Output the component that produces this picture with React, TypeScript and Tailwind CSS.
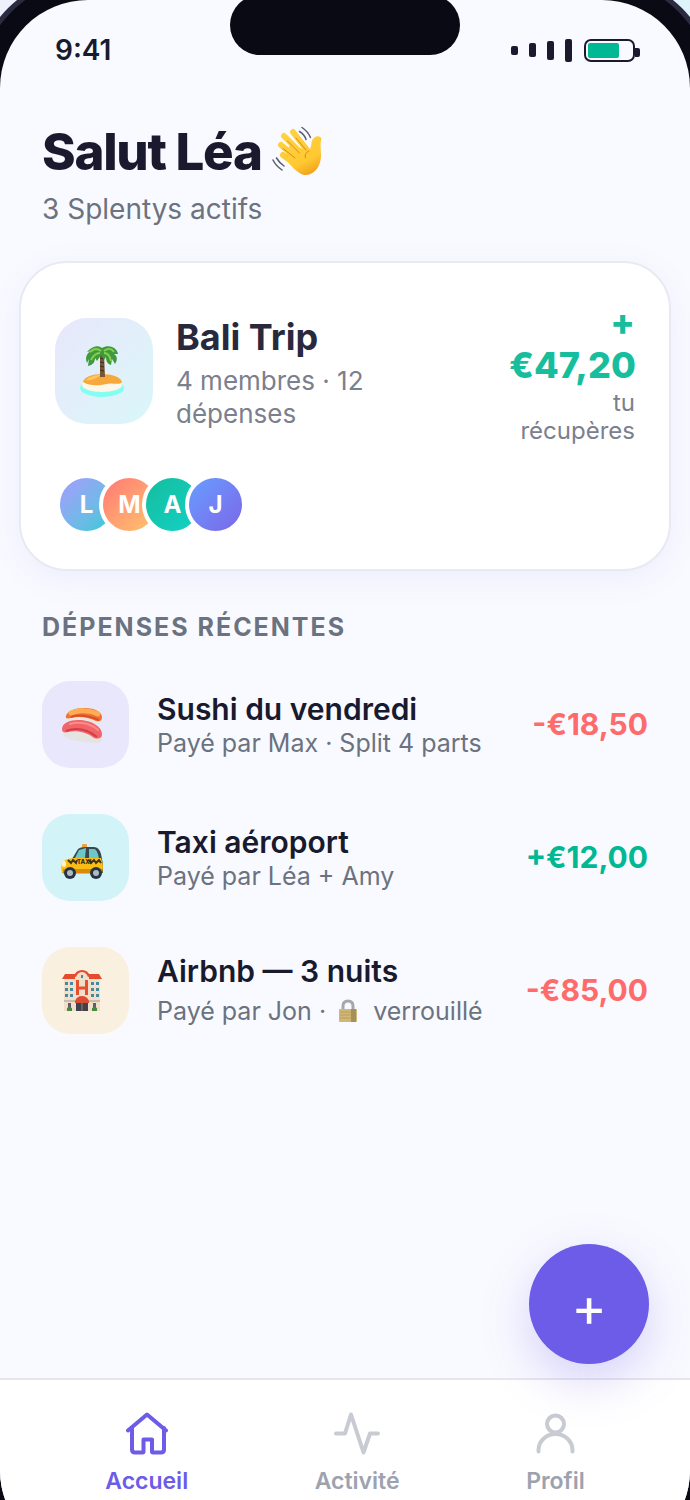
const icons = {
  home: (
    <svg viewBox="0 0 42 43" className="h-[43px] w-[42px]" fill="none" stroke="currentColor" strokeWidth="4" strokeLinecap="round" strokeLinejoin="round">
      <path d="M2 18.500 21 2.500l19 16" />
      <path d="M6 16v21.500q0 3 3 3h7.500q1 0 1-1v-12h8.500v12q0 1 1 1H35q3 0 3-3V16" />
    </svg>
  ),
  activity: (
    <svg viewBox="0 0 46 43" className="h-[43px] w-[46px]" fill="none" stroke="currentColor" strokeWidth="4" strokeLinecap="round" strokeLinejoin="round">
      <path d="M2 21.500h9L17 2.500l12.500 38 6.500-19h8" />
    </svg>
  ),
  profile: (
    <svg viewBox="0 0 40 43" className="h-[43px] w-[40px]" fill="none" stroke="currentColor" strokeWidth="4" strokeLinecap="round">
      <circle cx="20.500" cy="12" r="8.500" />
      <path d="M3.500 39.500v-1.500a17 16 0 0 1 34 0v1.500" />
    </svg>
  ),
};

const members = [
  { letter: "L", color: "from-[#a29bfe] to-[#20cbd6]" },
  { letter: "M", color: "from-[#ff7675] to-[#fdc56b]" },
  { letter: "A", color: "from-[#16bd9d] to-[#12d2c6]" },
  { letter: "J", color: "from-[#659dff] to-[#7a66e9]" },
];

const WaveIcon = () => (
  <svg viewBox="0 0 52 52" className="h-[52px] w-[52px]" role="img" aria-label="Coucou">
    <defs>
      <linearGradient id="hand" gradientUnits="userSpaceOnUse" x1="14" y1="6" x2="36" y2="50">
        <stop offset="0" stopColor="#ffd23f" />
        <stop offset="0.7" stopColor="#ffc933" />
        <stop offset="1" stopColor="#f0a01a" />
      </linearGradient>
    </defs>
    <g fill="none" stroke="url(#hand)" strokeLinecap="round">
      <path d="M12 10 30 28" strokeWidth="6" />
      <path d="m21 6 14 18" strokeWidth="6" />
      <path d="m9 19 18 15" strokeWidth="6" />
      <path d="m11 29 15 11" strokeWidth="6" />
    </g>
    <path d="M18 18 36 25q3-2 3.500-8c.5-7 9-9 10-4-2 6 0 12-.5 18C48 43 40 50 32 49 26 48 17 38 13 32Z" fill="url(#hand)" />
    <path d="m15.500 15 12 12M24 12l10 12M11 22.500 23 32M37 25c-3 1-4.500 4-3.500 7" fill="none" stroke="#d98b16" strokeLinecap="round" />
    <path d="M30 1.500q6 4 8.500 10M27.500 5.500q5 3 6.500 8M1 34q3 6 9 10M4.500 32q3 5 7.500 8" fill="none" stroke="#5a5c70" strokeWidth="1.500" strokeLinecap="round" />
  </svg>
);

const IslandIcon = () => (
  <svg viewBox="0 0 46 53" className="h-[53px] w-[46px]" aria-hidden="true">
    <ellipse cx="23" cy="43" rx="22" ry="9" fill="#82fff0" />
    <ellipse cx="23" cy="40" rx="20" ry="7" fill="#fff6e8" />
    <path d="M4 37c1-5 9-8 19-8s19 3 20 8c-3 4-9 0-16 2S10 41 4 37Z" fill="#f6a83c" />
    <path d="M7 35c3-3 9-5 15-5-4 3-10 6-15 5Z" fill="#ffc763" />
    <path d="M21 9h4l1 23h-5Z" fill="#79562f" />
    <path d="M21 13l4 1m-4 3 4 1m-4 3 4 1m-4 3 4 1" stroke="#3c2c1d" />
    <path d="M23 3C18-1 12 2 8 7l4-1c-5 3-6 7-4 12l2-4-1 7c5-1 7-4 7-8l2 3 4-6 3 5 2-3c0 5 2 7 5 8l1-6 3 5c3-5 2-8-1-10h4C38 2 29-1 23 3Z" fill="#3f9a3d" />
    <path d="M22 6c-4-3-8-2-11 1M21 8c-4 0-7 3-9 7M25 6c4-3 7-3 10 1M25 8c4 0 6 3 7 8" fill="none" stroke="#86cf4d" strokeWidth="2" />
  </svg>
);

const SushiIcon = () => (
  <svg viewBox="0 0 42 42" className="h-[42px] w-[42px]" aria-hidden="true">
    <path d="M5 12h35l1 5q-1 3-4 3L8 18c-3 0-4-3-3-6Z" fill="#e9e7e6" />
    <path d="M5 12C6 7 14 4 24 4s17 4 17 9c0 4-2 5-6 4-8-4-18-5-25-3-4 1-6 0-5-2Z" fill="#f0703a" />
    <path d="M10 9c7-3 19-3 27 1" stroke="#ffad4e" strokeWidth="5" fill="none" strokeLinecap="round" />
    <path d="M10 13c8-3 18-1 28 3" stroke="#d84f22" strokeWidth="2" fill="none" />
    <path d="M1 25h36l4 8c1 4-1 6-5 6C24 39 3 36 2 30Z" fill="#e6e4e3" />
    <path d="M1 25c0-6 8-9 16-9 14 0 24 7 24 14 0 5-4 5-8 4-7-6-18-8-26-6-4 1-6 0-6-3Z" fill="#f0656a" />
    <path d="M9 20c9-3 20-1 28 6" stroke="#ff8b86" strokeWidth="2" fill="none" strokeLinecap="round" />
    <path d="M5 27c11-4 22-1 31 6" stroke="#d63c47" strokeWidth="2" fill="none" />
  </svg>
);

const TaxiIcon = () => (
  <svg viewBox="0 -7 42 42" className="h-[42px] w-[42px]" aria-hidden="true">
    <rect x="21" y="0" width="5" height="4" rx="1" fill="#f3a13c" />
    <path d="M11 15 17 5q2-2 8-2h8q5 0 7 7l2 10v9H1v-8q0-4 10-6Z" fill="#394650" />
    <path d="m14 14 4-8 7-2-1 10ZM28 5h5q3 0 5 9H28Z" fill="#6cc8c7" />
    <path d="M1 20q1-5 11-6h28q2 5 2 9l-1 7H2q-3-4-1-10Z" fill="#f9bd16" />
    <path d="M2 25h39v4H2Z" fill="#dc8907" />
    <path d="m7 16 3 3 2-3 3 3 1-3M28 16l2 3 3-3 2 3 3-3 2 3" stroke="#3c351b" strokeWidth="2" fill="none" />
    <text x="16" y="20" fontSize="6" fontWeight="800" fill="#2c2815">TAXI</text>
    <ellipse cx="3" cy="20" rx="2" ry="3" fill="#fff4c8" />
    <circle cx="9" cy="29" r="6" fill="#263342" />
    <circle cx="9" cy="29" r="3" fill="#b0bac2" />
    <circle cx="35" cy="29" r="6" fill="#263342" />
    <circle cx="35" cy="29" r="3" fill="#b0bac2" />
  </svg>
);

const HotelIcon = () => (
  <svg viewBox="0 0 42 42" className="h-[42px] w-[42px]" aria-hidden="true">
    <path d="M3 8h10q2-7 8-7t8 7h10v33H3Z" fill="#f0dfca" />
    <path d="M1 9 4 4h10v5Zm27 0V4h10l3 5ZM13 6q2-6 8-6t8 6l-2 1q-2-5-6-5t-6 5Z" fill="#e34c2d" />
    <path d="M4 12h3v3H4Zm5 0h3v3H9Zm-5 6h3v3H4Zm5 0h3v3H9Zm-5 6h3v3H4Zm5 0h3v3H9Zm21-12h3v3h-3Zm5 0h3v3h-3Zm-5 6h3v3h-3Zm5 0h3v3h-3Zm-5 6h3v3h-3Zm5 0h3v3h-3ZM20 5h2v3h-2Z" fill="#47889d" />
    <path d="M16.500 10v15m9-15v15M16 18h10" stroke="#e7502e" strokeWidth="3" />
    <path d="M14 31q2-5 7-5t7 5v2H14Z" fill="#db4d31" />
    <path d="M15 33h12v8H15Z" fill="#40434d" />
    <path d="M21 33v8" stroke="#9a8067" />
    <path d="M3 31h11M28 31h11" stroke="#cbbba9" strokeWidth="2" />
    <path d="M7 33h3v6H7Zm25 0h3v6h-3Z" fill="#5d6064" />
    <path d="M6 41v-3l2-1 3 1v3Zm25 0v-3l3-1 2 1v3Z" fill="#47893c" />
  </svg>
);

const LockIcon = () => (
  <svg viewBox="0 0 20 24" className="mr-2 ml-3 inline-block h-6 w-5 align-[-3px]" role="img" aria-label="cadenas">
    <path d="M5 11V7q0-5 5-5t5 5v4" fill="none" stroke="#a4a8aa" strokeWidth="3" />
    <rect x="1" y="10" width="18" height="13" rx="1" fill="#cfb777" />
    <path d="M2 13h16M2 16h16M2 19h16" stroke="#b99f60" />
    <path d="M13 10h5v13h-5Z" fill="#a88e58" />
  </svg>
);

const expenses = [
  { title: "Sushi du vendredi", detail: "Payé par Max · Split 4 parts", line: "leading-[32px]", amount: "-€18,50", icon: <SushiIcon />, bg: "bg-[#e9e7fb]", color: "text-[#ff6b6b]" },
  { title: "Taxi aéroport", detail: "Payé par Léa + Amy", line: "leading-[32px]", amount: "+€12,00", icon: <TaxiIcon />, bg: "bg-[#d2f3f8]", color: "text-[#00b894]" },
  { title: "Airbnb — 3 nuits", detail: <>Payé par Jon ·<LockIcon /> verrouillé</>, line: "mt-1 leading-[36px]", amount: "-€85,00", icon: <HotelIcon />, bg: "bg-[#faf0df]", color: "text-[#ff6b6b]" },
];

const StatusBar = () => (
  <div className="flex h-[100px] items-center justify-between pr-[50px] pl-[55px]">
    <span className="text-[28px] leading-[34px] font-semibold">9:41</span>
    <div className="flex items-center">
      <div className="flex items-center gap-[11px]">
        <span className="h-[9px] w-[7px] rounded-xs bg-[#1a1a2e]" />
        <span className="h-[14px] w-[7px] rounded-xs bg-[#1a1a2e]" />
        <span className="h-[19px] w-[7px] rounded-xs bg-[#1a1a2e]" />
        <span className="h-[23px] w-[7px] rounded-xs bg-[#1a1a2e]" />
      </div>
      <div className="ml-[12px] h-[23px] w-[51px] rounded-[7px] border-2 border-[#1a1a2e] p-[2px]">
        <div className="h-full w-[31px] rounded-xs bg-[#00b894]" />
      </div>
      <span className="mt-1 h-[9px] w-[5px] rounded-r-xs bg-[#1a1a2e]" />
    </div>
  </div>
);

export default function App() {
  return (
    <div className="flex min-h-screen flex-col overflow-hidden bg-linear-to-r from-[#eef0fc] to-[#dff3fa] font-['Inter',sans-serif] text-[#1a1a2e]">
      {/* The phone body is larger than the window on every side */}
      <div className="-mx-[25px] -mt-[25px] -mb-[83px] flex grow flex-col rounded-[113px] border-5 border-[#2a2a40] bg-[#0a0a14] p-[20px]">
        <div className="relative flex grow flex-col overflow-hidden rounded-[88px] bg-[#f9faff]">
          <div className="absolute -top-[5px] left-1/2 h-[60px] w-[230px] -translate-x-1/2 rounded-full bg-[#0a0a14]" />
          <StatusBar />

          <header className="px-[42px] pt-[20px]">
            <h1 className="flex items-center gap-[10px] text-[51px] leading-[64px] font-extrabold tracking-tight">
              Salut Léa <WaveIcon />
            </h1>
            <p className="mt-2 text-[28px] leading-[34px] text-[#6b7280]">3 Splentys actifs</p>
          </header>

          <section className="mx-[19px] mt-[35px] rounded-[48px] border-2 border-[#e9e9f3] bg-white px-[34px] pt-[38px] pb-[34px] shadow-[0_8px_32px_rgba(108,92,231,0.08)]">
            <div className="flex items-start">
              <div className="mt-[17px] flex h-[106px] w-[98px] shrink-0 items-center justify-center rounded-[32px] bg-linear-to-br from-[#e9e7fb] to-[#d9f7f9] pr-1">
                <IslandIcon />
              </div>
              <div className="mt-[13px] ml-[23px] w-[230px]">
                <h2 className="text-[36px] leading-[46px] font-bold text-[#29293d]">Bali Trip</h2>
                <p className="mt-[4px] text-[26px] leading-[33px] text-[#7a808d]">4 membres · 12 dépenses</p>
              </div>
              <div className="ml-auto w-[126px] text-right">
                <p className="text-[36px] leading-[43px] font-extrabold text-[#17be9d]">+ €47,20</p>
                <p className="mt-[2px] text-[24px] leading-[28px] text-[#7a808d]">tu récupères</p>
              </div>
            </div>
            <div className="mt-[29px] flex pl-px">
              {members.map((m) => (
                <span key={m.letter} className={"-mr-[18px] flex h-[61px] w-[61px] items-center justify-center rounded-full border-4 border-white bg-linear-to-br text-[24px] font-bold text-white " + m.color}>
                  {m.letter}
                </span>
              ))}
            </div>
          </section>

          <section className="px-[42px] pt-[40px]">
            <h2 className="text-[25px] leading-[32px] font-bold tracking-[2px] text-[#6b7280]">DÉPENSES RÉCENTES</h2>
            <ul className="mt-[38px] flex flex-col gap-[46px]">
              {expenses.map((e) => (
                <li key={e.title} className="flex items-center">
                  <div className={"flex h-[87px] w-[87px] shrink-0 items-center justify-center rounded-[28px] pr-2 " + e.bg}>{e.icon}</div>
                  <div className="ml-[28px]">
                    <h3 className="text-[30px] leading-[36px] font-semibold">{e.title}</h3>
                    <p className={"text-[25px] text-[#6b7280] " + e.line}>{e.detail}</p>
                  </div>
                  <span className={"ml-auto text-[30px] font-bold " + e.color}>{e.amount}</span>
                </li>
              ))}
            </ul>
          </section>

          <div className="mt-auto flex justify-end px-[41px] pb-[14px]">
            <button aria-label="Ajouter une dépense" className="z-10 flex h-[120px] w-[120px] items-center justify-center rounded-full bg-[#6c5ce7] pt-1 text-[54px] text-white shadow-[0_16px_48px_rgba(108,92,231,0.25)]">
              +
            </button>
          </div>
          <nav className="flex justify-around border-t-2 border-[#e6e7ee] bg-white px-[42px] pt-[32px] pb-[63px] text-[23px] leading-[28px] font-semibold text-[#9ca3af]">
            <a href="#" className="flex flex-col items-center gap-[12px] text-[#6c5ce7]">{icons.home}Accueil</a>
            <a href="#" className="flex flex-col items-center gap-[12px]"><span className="text-[#c8cbd2]">{icons.activity}</span>Activité</a>
            <a href="#" className="flex flex-col items-center gap-[12px]"><span className="text-[#c8cbd2]">{icons.profile}</span>Profil</a>
          </nav>
        </div>
      </div>
    </div>
  );
}
